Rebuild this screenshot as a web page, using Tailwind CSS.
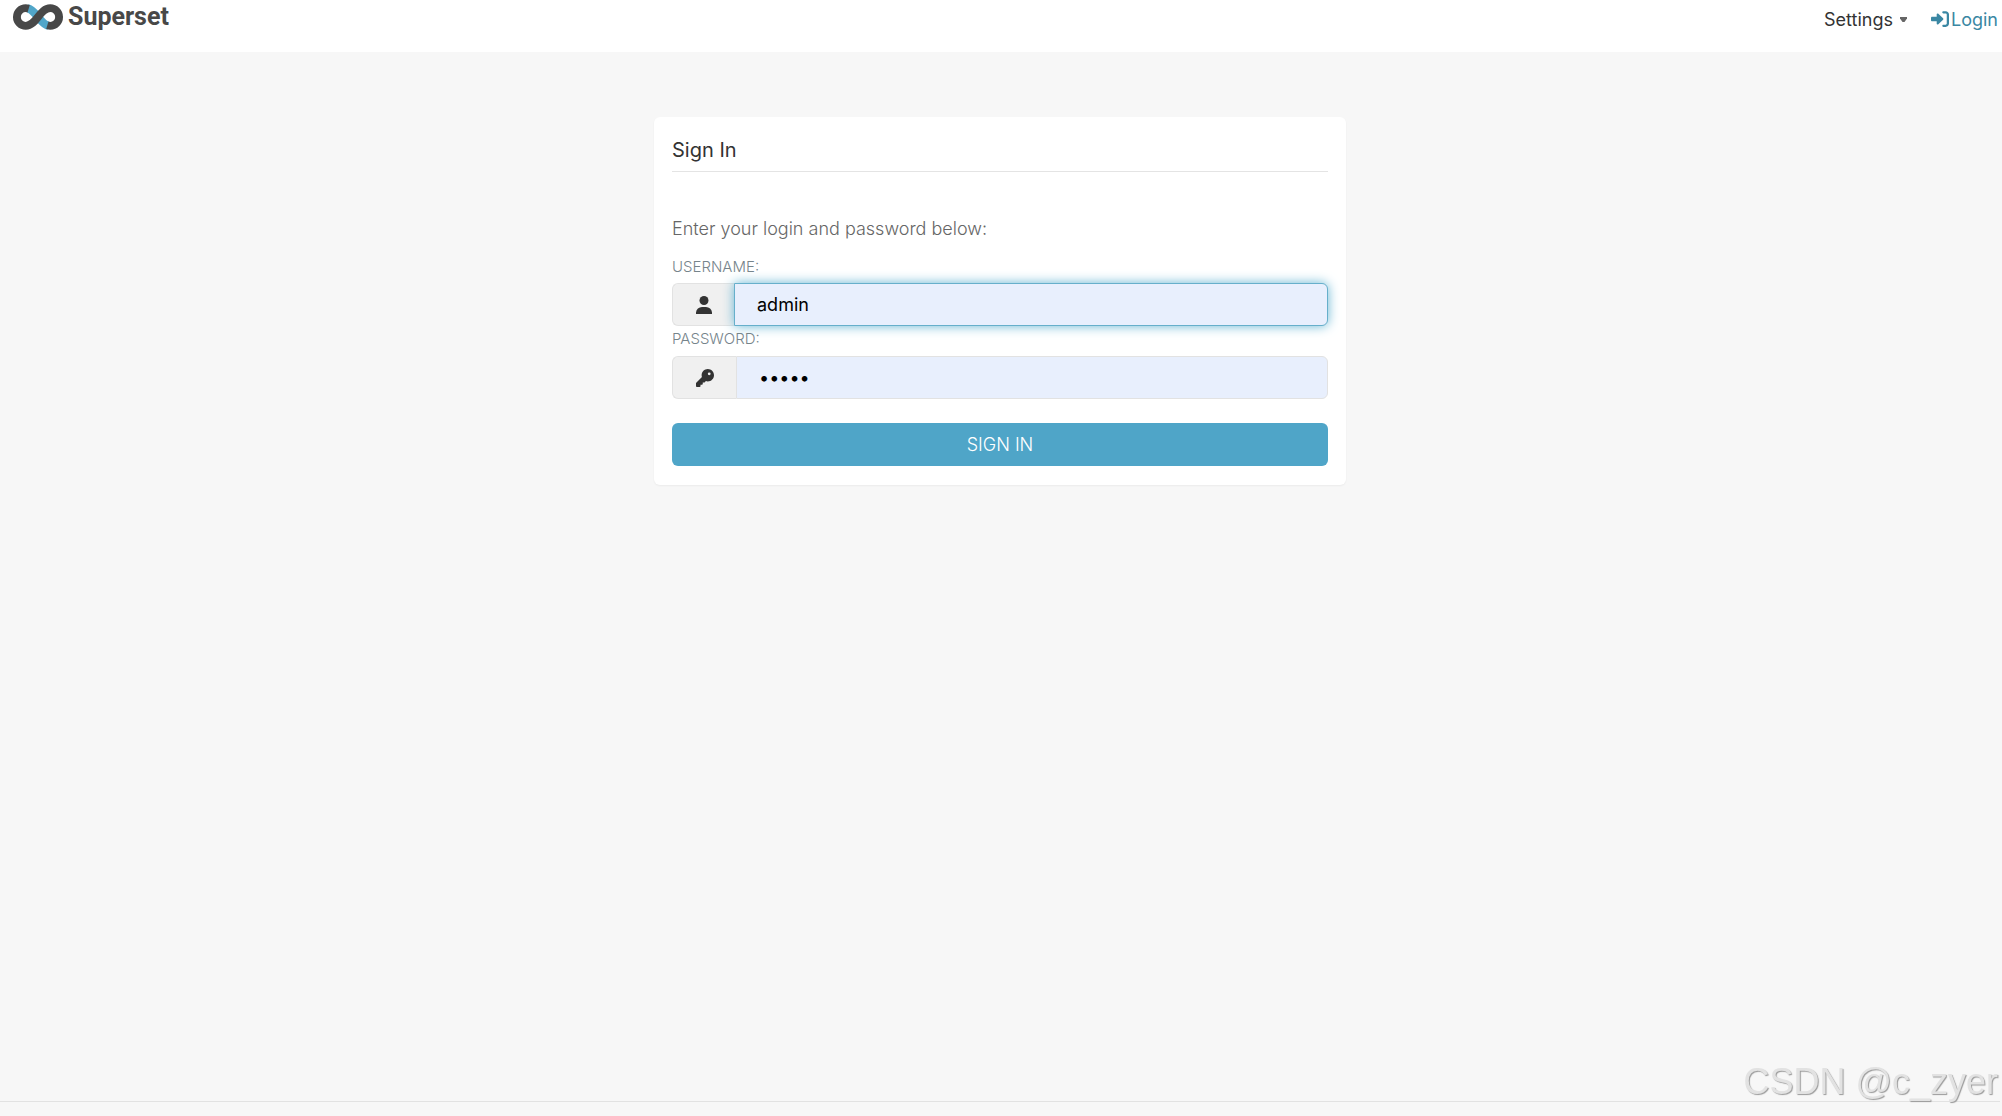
<!DOCTYPE html>
<html lang="en">
<head>
  <meta charset="UTF-8" />
  <meta name="viewport" content="width=device-width, initial-scale=1" />
  <title>Superset</title>
  <script src="https://cdn.jsdelivr.net/npm/@tailwindcss/browser@4"></script>
</head>
<body class="flex flex-col min-h-screen bg-[#f7f7f7] font-['Inter',sans-serif] text-[#333]">
  <header class="flex items-start justify-between h-[52px] bg-white pl-3 pr-1">
    <a href="/" class="flex items-center gap-1 h-[34px] text-[#484848]">
      <svg class="w-[52px] h-7" viewBox="0 0 53 28" fill="none" stroke-width="8">
        <path d="M16 5.200C24 6.500 29 21.500 37 22.800" stroke="#51a6c9" stroke-width="8.500" />
        <path d="M17 5.500C16 5.200 15 5 14 5a9 9 0 0 0 0 18c11 0 14-18 25-18a9 9 0 0 1 0 18c-1 0-2-.2-3-.5" stroke="#484848" />
      </svg>
      <span class="font-['Roboto',sans-serif] font-bold text-[25px]">Superset</span>
    </a>
    <nav class="flex items-center gap-6 h-[38px] text-[18px]">
      <a href="#" class="flex items-center gap-[7px]">
        Settings
        <svg class="w-[7px] h-[5px]" viewBox="0 0 7 5" fill="#666"><path d="M0 0h7v1.500L4.500 5h-2L0 1.500z" /></svg>
      </a>
      <a href="/login/" class="flex items-center text-[#3a87a3]">
        <svg class="w-5 h-[18px]" viewBox="0 0 512 512" preserveAspectRatio="xMinYMid meet" fill="currentColor">
          <path d="M352 96h64c17.700 0 32 14.300 32 32v256c0 17.700-14.300 32-32 32h-64c-17.700 0-32 14.300-32 32s14.300 32 32 32h64c53 0 96-43 96-96V128c0-53-43-96-96-96h-64c-17.700 0-32 14.300-32 32s14.300 32 32 32zM344 238L201 103c-15-14-39-4-39 17v72H32c-18 0-32 14-32 32v64c0 18 14 32 32 32h130v72c0 21 24 31 39 17l143-135c11-10 11-26 0-36z" />
        </svg>
        Login
      </a>
    </nav>
  </header>

  <main class="flex-1 pt-[65px] pl-4 pr-[18px]">
    <section class="w-full max-w-[692px] mx-auto bg-white rounded-md shadow-xs px-[18px] py-[19px]">
      <h1 class="h-9 text-[20px] leading-[29px] border-b border-[#e4e4e4]">Sign In</h1>
      <form>
        <p class="mt-11 text-[18px] leading-[26px] font-light text-[#666]">Enter your login and password below:</p>
        <label for="username" class="block mt-[13px] mb-1 text-[15px] leading-6 font-light text-[#76848b]">USERNAME:</label>
        <div class="flex h-[43px]">
          <span class="flex items-center justify-center w-[62px] rounded-l-md border border-r-0 border-[#e2e2e2] bg-[#f0f0f0]">
            <svg class="w-4 h-[18px]" viewBox="0 0 16 18" fill="#333">
              <circle cx="8" cy="4.500" r="4.500" />
              <path d="M0 18v-1.500A6 6 0 0 1 6 11h4a6 6 0 0 1 6 5.500V18z" />
            </svg>
          </span>
          <input type="text" id="username" name="username" value="admin" class="flex-1 min-w-0 px-[22px] text-[18px] text-black bg-[#e8effd] border border-[#66afcb] rounded-r-md outline-none shadow-[0_0_12px_#66b5d3]" />
        </div>
        <label for="password" class="block mt-px mb-[5px] text-[15px] leading-6 font-light text-[#76848b]">PASSWORD:</label>
        <div class="flex h-[43px]">
          <span class="flex items-center justify-center w-16 rounded-l-md border border-r-0 border-[#e2e2e2] bg-[#f0f0f0]">
            <svg class="w-[18px] h-[18px]" viewBox="0 0 512 512" fill="#333">
              <path d="M336 352c97 0 176-79 176-176S433 0 336 0 160 79 160 176c0 19 3 37 9 54L7 391c-5 5-7 11-7 17v80c0 13 11 24 24 24h80c13 0 24-11 24-24v-40h40c13 0 24-11 24-24v-40h40c6 0 13-3 17-7l33-33c17 5 35 8 54 8zm40-256a40 40 0 1 1 0 80 40 40 0 1 1 0-80z" />
            </svg>
          </span>
          <input type="password" id="password" name="password" value="admin" class="flex-1 min-w-0 px-[22px] text-[18px] text-black bg-[#e8effd] border border-[#e2e2e2] rounded-r-md outline-none" />
        </div>
        <button type="submit" class="block w-full h-[43px] mt-6 rounded-md bg-[#4fa5c8] text-white text-[18px] font-light">SIGN IN</button>
      </form>
    </section>
  </main>

  <footer class="h-[15px] mr-0.5 border-t border-[#e2e2e2]"></footer>
  <div class="fixed right-1 bottom-3 font-['Liberation_Sans',sans-serif] text-[36px] leading-[44px] text-[#e2e2e2] [text-shadow:1px_1px_1px_#999]">CSDN @c_zyer</div>
</body>
</html>
